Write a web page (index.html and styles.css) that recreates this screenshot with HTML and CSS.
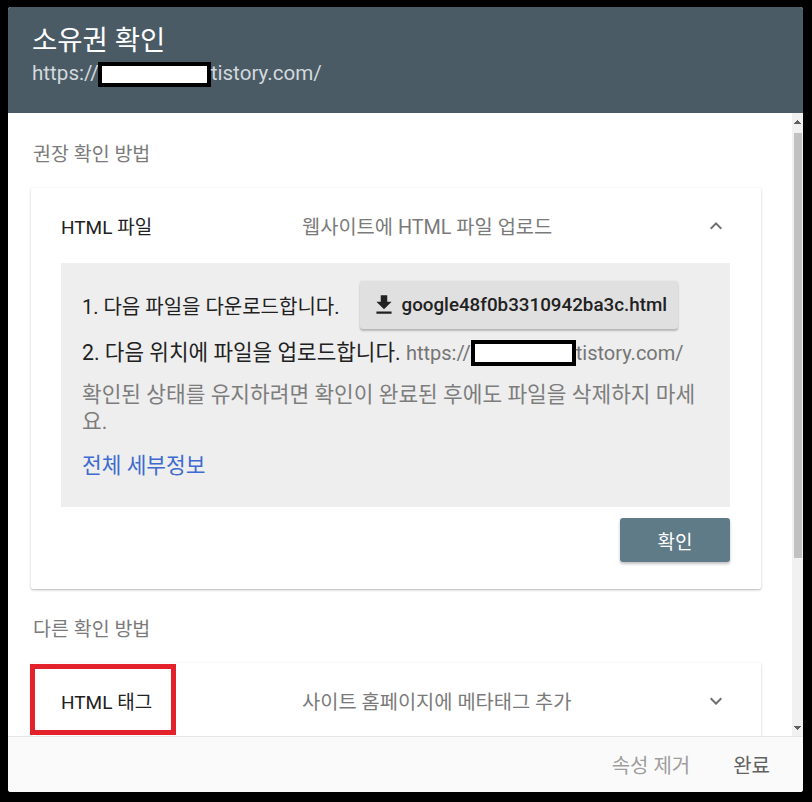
FILE: index.html
```html
<!DOCTYPE html>
<html lang="ko">
<head>
<meta charset="utf-8">
<title>소유권 확인</title>
<link rel="stylesheet" href="styles.css">
</head>
<body>
<div class="dialog">
  <header class="dlg-head">
    <h1 class="dlg-title">소유권 확인</h1>
    <div class="dlg-url">https://<span class="redact redact-head"></span>tistory.com/</div>
  </header>

  <div class="dlg-body">
    <div class="scroll-view">
      <div class="section-label">권장 확인 방법</div>
      <section class="card">
        <div class="card-head">
          <span class="card-title">HTML 파일</span>
          <span class="card-desc">웹사이트에 HTML 파일 업로드</span>
          <svg class="chev" viewBox="0 0 24 24" width="24" height="24"><path d="M12 8l-6 6 1.41 1.41L12 10.83l4.59 4.58L18 14z"/></svg>
        </div>
        <div class="card-content">
          <div class="steps">
            <div class="step-download">
              <span>1. 다음 파일을 다운로드합니다.</span>
              <button class="dl-btn" type="button">
                <svg class="dl-icon" viewBox="0 0 24 24" width="26" height="26"><path d="M19 9h-4V3H9v6H5l7 7 7-7zM5 18v2h14v-2H5z"/></svg>
                <span>google48f0b3310942ba3c.html</span>
              </button>
            </div>
            <div class="step-upload">2. 다음 위치에 파일을 업로드합니다. <span class="muted">https://<span class="redact redact-inline"></span>tistory.com/</span></div>
            <p class="note">확인된 상태를 유지하려면 확인이 완료된 후에도 파일을 삭제하지 마세요.</p>
            <a class="details" href="#">전체 세부정보</a>
          </div>
          <div class="actions">
            <button class="confirm" type="button">확인</button>
          </div>
        </div>
      </section>

      <div class="section-label second">다른 확인 방법</div>
      <section class="card">
        <div class="card-head">
          <span class="card-title">HTML 태그</span>
          <span class="card-desc">사이트 홈페이지에 메타태그 추가</span>
          <svg class="chev" viewBox="0 0 24 24" width="24" height="24"><path d="M16.59 8.59L12 13.17 7.41 8.59 6 10l6 6 6-6z"/></svg>
        </div>
        <div class="annot"></div>
      </section>
    </div>

    <div class="scrollbar" aria-hidden="true">
      <span class="sb-btn sb-up"></span>
      <div class="sb-track"><span class="sb-thumb"></span></div>
      <span class="sb-btn sb-down"></span>
    </div>
  </div>

  <footer class="dlg-foot">
    <button class="foot-btn foot-remove" type="button">속성 제거</button>
    <button class="foot-btn foot-done" type="button">완료</button>
  </footer>
</div>
</body>
</html>
```

FILE: styles.css
```css
* {
  box-sizing: border-box;
}

body {
  margin: 0;
  background: #000;
  font-family: Roboto, "Noto Sans CJK KR", sans-serif;
  color: #212121;
}

.dialog {
  width: 795px;
  height: 785px;
  margin: 7px 0 0 8px;
  background: #fff;
  border-radius: 3px;
  display: flex;
  flex-direction: column;
  overflow: hidden;
}

/* header */
.dlg-head {
  flex: none;
  height: 106px;
  padding: 18px 24px 0 24px;
  background: #4a5b66;
  color: #fff;
}

.dlg-title {
  margin: 0;
  font-size: 27.5px;
  font-weight: 400;
  line-height: 32px;
}

.dlg-url {
  margin-top: 3px;
  font-size: 20.6px;
  line-height: 26px;
  color: #d3d9dc;
}

.redact {
  display: inline-block;
  border: 4px solid #000;
  background: #fff;
  vertical-align: middle;
}

.redact-head {
  width: 113px;
  height: 25px;
  margin-left: -1px;
}

.redact-inline {
  width: 105px;
  height: 26px;
  margin-top: -3px;
}

/* body */
.dlg-body {
  flex: 1;
  min-height: 0;
  display: flex;
  overflow: hidden;
}

.scroll-view {
  flex: 1;
  min-width: 0;
  overflow: hidden;
  padding: 30px 31px 0 23px;
}

.scrollbar {
  flex: none;
  width: 11px;
  display: flex;
  flex-direction: column;
  background: #f1f1f1;
}

.sb-btn {
  flex: none;
  height: 17px;
  background-repeat: no-repeat;
  background-position: center;
  background-size: 7px 4px;
}

.sb-up {
  background-image: conic-gradient(from 139deg at 50% 0, #606060 82deg, transparent 0);
}

.sb-down {
  background-image: conic-gradient(from -41deg at 50% 100%, #606060 82deg, transparent 0);
}

.sb-track {
  flex: 1;
  padding: 3px 1px 0 2px;
}

.sb-thumb {
  display: block;
  height: 425px;
  background: #c1c1c1;
}

.section-label {
  font-size: 19.5px;
  line-height: 24px;
  color: #7b7b7b;
  padding-left: 2px;
  margin-bottom: 21px;
}

.section-label.second {
  margin-top: 29px;
}

.card {
  position: relative;
  background: #fff;
  border-radius: 2px;
  box-shadow: 0 1px 3px rgba(0, 0, 0, 0.2), 0 1px 1px rgba(0, 0, 0, 0.1);
}

.card-head {
  display: grid;
  grid-template-columns: 241px 1fr 24px;
  align-items: center;
  height: 75px;
  padding: 0 33px 0 30px;
}

.card-title {
  font-size: 19px;
  color: #212121;
}

.card-desc {
  font-size: 19.8px;
  color: #7a7a7a;
}

.chev {
  fill: #6f6f6f;
  display: block;
}

.card-content {
  padding: 0 31px 27px 30px;
}

.steps {
  background: #eee;
  padding: 18px 21px 28px 21px;
}

.step-download {
  display: flex;
  align-items: center;
  gap: 21px;
  height: 48px;
  font-size: 20px;
  color: #212121;
}

.dl-btn {
  display: flex;
  align-items: center;
  gap: 4px;
  height: 48px;
  padding: 0 11px 0 11px;
  border: 0;
  border-radius: 3px;
  background: #e0e0e0;
  box-shadow: 0 2px 2px rgba(0, 0, 0, 0.22), 0 0 2px rgba(0, 0, 0, 0.1);
  font-family: Roboto, "Noto Sans CJK KR", sans-serif;
  font-weight: 500;
  font-size: 18.8px;
  color: #212121;
}

.dl-icon {
  fill: #212121;
  display: block;
}

.step-upload {
  margin-top: 10px;
  font-size: 21.3px;
  line-height: 27px;
  color: #212121;
}

.muted {
  color: #757575;
  font-size: 20px;
}

.note {
  margin: 14px 0 0;
  font-size: 21.4px;
  line-height: 27px;
  color: #7d7d7d;
}

.details {
  display: block;
  margin-top: 17px;
  font-size: 21.4px;
  line-height: 27px;
  color: #3d6bcf;
  text-decoration: none;
}

.actions {
  display: flex;
  justify-content: flex-end;
  margin-top: 11px;
}

.confirm {
  width: 110px;
  height: 44px;
  border: 0;
  border-radius: 3px;
  background: #5f7b88;
  color: #fff;
  font-family: Roboto, "Noto Sans CJK KR", sans-serif;
  font-size: 19px;
  box-shadow: 0 2px 3px rgba(0, 0, 0, 0.25);
}

.annot {
  position: absolute;
  left: -1px;
  top: 1px;
  width: 146px;
  height: 71px;
  border: 5px solid #e2212b;
}

/* footer */
.dlg-foot {
  flex: none;
  height: 56px;
  display: flex;
  justify-content: flex-end;
  align-items: center;
  gap: 43px;
  padding-right: 33px;
  background: #fafafa;
  border-top: 1px solid #e6e6e6;
}

.foot-btn {
  border: 0;
  padding: 0;
  background: none;
  font-family: Roboto, "Noto Sans CJK KR", sans-serif;
  font-size: 20px;
}

.foot-remove {
  color: #9e9e9e;
}

.foot-done {
  color: #616161;
}
```
